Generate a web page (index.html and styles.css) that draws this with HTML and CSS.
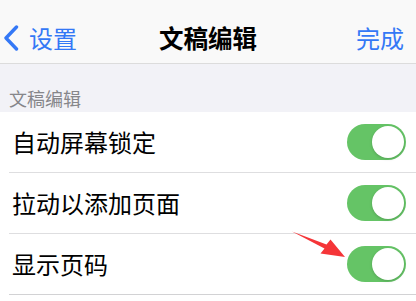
FILE: index.html
```html
<!DOCTYPE html>
<html lang="zh-CN">
<head>
<meta charset="utf-8">
<link rel="stylesheet" href="styles.css">
</head>
<body>
<div class="screen">
  <header class="nav">
    <div class="nav-left">
      <svg class="chev" width="16" height="26" viewBox="0 0 16 26"><path d="M13.5 2 L3 13 L13.5 24" fill="none" stroke="#3478f6" stroke-width="3.4" stroke-linecap="round" stroke-linejoin="round"/></svg>
      <span class="back">设置</span>
    </div>
    <div class="nav-title">文稿编辑</div>
    <div class="nav-right">完成</div>
  </header>
  <div class="section-head">文稿编辑</div>
  <ul class="list">
    <li class="row"><span class="label">自动屏幕锁定</span><span class="toggle"><span class="knob"></span></span></li>
    <li class="row"><span class="label">拉动以添加页面</span><span class="toggle"><span class="knob"></span></span></li>
    <li class="row"><span class="label">显示页码</span><span class="toggle"><span class="knob"></span></span></li>
  </ul>
  <svg class="arrow" width="416" height="301" viewBox="0 0 416 301"><polygon points="292,231.5 326.5,244.5 330.5,239.5 345,257 320.5,253.5 324.5,248.5" fill="#f53538"/></svg>
</div>
</body>
</html>
```
FILE: styles.css
```css
* { box-sizing: border-box; margin: 0; padding: 0; }
html, body { width: 416px; height: 301px; overflow: hidden; }
body { background: #f2f2f7; font-family: "Noto Sans CJK SC", "Noto Sans", sans-serif; }
.screen { position: relative; width: 416px; height: 301px; display: flex; flex-direction: column; }
.nav {
  height: 64px;
  flex: none;
  background: #f9f9f9;
  border-bottom: 1px solid #dcdcdc;
  display: flex;
  align-items: center;
  padding: 12px 12px 0 3px;
  position: relative;
}
.nav-left { display: flex; align-items: center; gap: 10px; color: #3478f6; font-size: 24px; }
.chev { display: block; }
.back { line-height: 1; }
.nav-title {
  position: absolute; left: 0; right: 0; top: 12px; bottom: 0;
  display: flex; align-items: center; justify-content: center;
  font-size: 24.5px; font-weight: 700; color: #000; pointer-events: none;
}
.nav-right { margin-left: auto; color: #3478f6; font-size: 24px; line-height: 1; }
.section-head {
  height: 48px;
  flex: none;
  padding: 22px 0 0 9px;
  font-size: 18px; color: #86868a; line-height: 24px;
}
.list { list-style: none; background: #fff; flex: 1; }
.row {
  height: 61px;
  margin-left: 9px;
  padding: 0 10px 0 3px;
  border-bottom: 1px solid #dedee0;
  display: flex; align-items: center; justify-content: space-between;
}
.row:last-child { border-bottom-color: #d2d2d4; }
.label { font-size: 24px; color: #000; line-height: 1; }
.toggle {
  width: 59px; height: 36px; border-radius: 18px;
  background: #65c466;
  display: flex; align-items: center; justify-content: flex-end;
  padding: 2px;
}
.knob {
  width: 32px; height: 32px; border-radius: 50%;
  background: #fff;
  box-shadow: 0 1px 3px rgba(0,0,0,0.18);
}
.arrow { position: absolute; left: 0; top: 0; pointer-events: none; }
```
